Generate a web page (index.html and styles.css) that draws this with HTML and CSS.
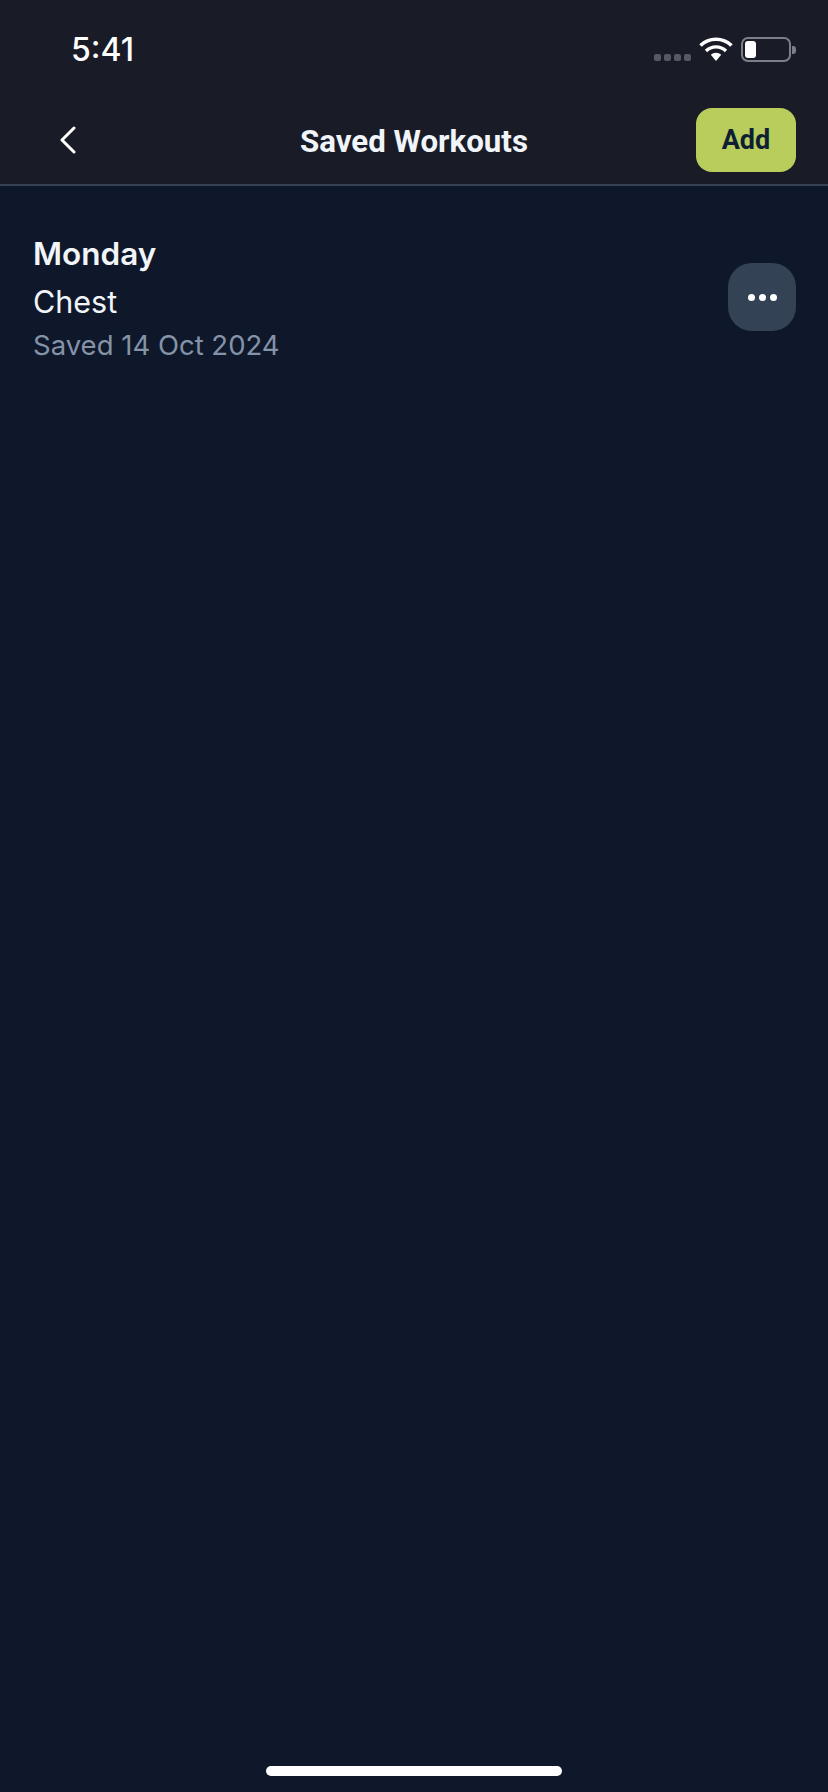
FILE: index.html
```html
<!DOCTYPE html>
<html lang="en">
<head>
<meta charset="utf-8">
<title>Saved Workouts</title>
<link rel="stylesheet" href="styles.css">
</head>
<body>
<div class="app">
  <header class="top">
    <div class="status">
      <span class="time">5:41</span>
      <div class="status-icons">
        <div class="signal"><i></i><i></i><i></i><i></i></div>
        <svg class="wifi" width="34" height="25" viewBox="0 0 34 25" aria-hidden="true">
          <path d="M1.500 8.500C5.500 4.600 11 2.300 17 2.300s11.500 2.300 15.500 6.200" fill="none" stroke="#fff" stroke-width="3.600"/>
          <path d="M7 14c2.700-2.600 6.200-4.100 10-4.100s7.300 1.500 10 4.100" fill="none" stroke="#fff" stroke-width="3.400"/>
          <path d="M11.800 17.800C13.200 16.500 15 15.800 17 15.800s3.800.7 5.200 2L17 24z" fill="#fff"/>
        </svg>
        <div class="battery"><div class="battery-body"><div class="battery-fill"></div></div><div class="battery-nub"></div></div>
      </div>
    </div>
    <div class="nav">
      <button class="back" aria-label="Back">
        <svg width="18" height="28" viewBox="0 0 18 28" aria-hidden="true"><path d="M15 2 3 14l12 12" fill="none" stroke="#fff" stroke-width="3" stroke-linecap="round" stroke-linejoin="round"/></svg>
      </button>
      <h1 class="title">Saved Workouts</h1>
      <button class="add">Add</button>
    </div>
  </header>
  <main class="list">
    <article class="row">
      <div class="info">
        <div class="day">Monday</div>
        <div class="muscle">Chest</div>
        <div class="saved">Saved 14 Oct 2024</div>
      </div>
      <button class="more" aria-label="More"><i></i><i></i><i></i></button>
    </article>
  </main>
  <div class="home-bar"></div>
</div>
</body>
</html>
```
FILE: styles.css
```css
* { box-sizing: border-box; }
html, body { margin: 0; padding: 0; }
body { background: #0f182a; font-family: Inter, "Liberation Sans", sans-serif; color: #f1f5f9; }
button { border: 0; padding: 0; margin: 0; font: inherit; background: none; }
.app { width: 828px; height: 1792px; display: flex; flex-direction: column; background: #0f182a; }
.top { height: 186px; flex: none; background: #191c27; border-bottom: 2px solid #364152; display: flex; flex-direction: column; }
.status { height: 100px; flex: none; display: flex; justify-content: space-between; align-items: flex-start; padding: 30px 32px 0 71px; }
.time { font-size: 32px; line-height: 40px; font-weight: 500; color: #fff; }
.status-icons { display: flex; align-items: flex-start; padding-top: 7px; }
.signal { display: flex; gap: 3px; margin: 17px 8px 0 0; }
.signal i { width: 7px; height: 7px; border-radius: 2px; background: #565963; }
.wifi { margin-right: 8px; }
.battery { display: flex; align-items: center; }
.battery-body { width: 50px; height: 25px; border: 2px solid #7d7f87; border-radius: 7px; padding: 2px; }
.battery-fill { width: 11px; height: 17px; background: #fff; border-radius: 3px; }
.battery-nub { width: 4px; height: 8px; background: #7d7f87; border-radius: 0 3px 3px 0; margin-left: 1px; }
.nav { flex: 1; display: flex; align-items: flex-start; justify-content: space-between; padding: 8px 32px 0 59px; position: relative; }
.back { width: 18px; height: 28px; margin-top: 18px; display: block; }
.back svg { display: block; }
.title { position: absolute; left: 0; right: 0; top: 24px; margin: 0; text-align: center; font-family: Roboto, Inter, sans-serif; font-size: 31.250px; line-height: 36px; font-weight: 700; color: #f1f5f9; }
.add { width: 100px; height: 64px; border-radius: 16px; background: #b9cd5c; color: #0f1f33; font-family: Roboto, Inter, sans-serif; font-size: 27px; font-weight: 700; }
.list { flex: 1; padding: 43px 32px 0 33px; }
.row { display: flex; justify-content: space-between; align-items: flex-start; }
.info { display: flex; flex-direction: column; }
.day { font-size: 31.500px; line-height: 50px; font-weight: 600; color: #f1f5f9; }
.muscle { font-size: 30.500px; line-height: 46px; color: #f1f5f9; }
.saved { font-size: 27.500px; line-height: 41px; color: #8593a8; }
.more { width: 68px; height: 68px; margin-top: 34px; border-radius: 24px; background: #344256; display: flex; align-items: center; justify-content: center; gap: 4px; }
.more i { width: 7px; height: 7px; border-radius: 50%; background: #fff; }
.home-bar { width: 296px; height: 10px; border-radius: 5px; background: #fff; flex: none; margin: 0 auto 16px; }
```
